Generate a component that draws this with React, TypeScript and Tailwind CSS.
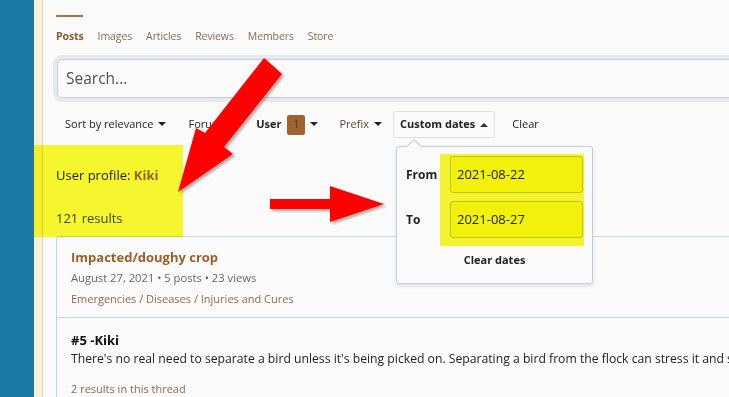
import React from "react";

const tabs = ["Posts", "Images", "Articles", "Reviews", "Members", "Store"];

const Caret = ({ up = false }: { up?: boolean }) => (
  <svg width="8" height="5" viewBox="0 0 8 5" className="ml-[5px] inline-block">
    {up ? <path d="M0 5 L4 1 L8 5 Z" fill="#333" /> : <path d="M0 0 L8 0 L4 4 Z" fill="#222" />}
  </svg>
);

const App: React.FC = () => {
  return (
    <div
      className="relative flex h-[397px] w-[729px] overflow-hidden bg-[#fafafa] text-[#222]"
      style={{ fontFamily: '"Open Sans", "Noto Sans", sans-serif' }}
    >
      {/* left strip */}
      <div className="w-[34px] shrink-0 bg-[#1b79a6]" />
      <div className="w-[8px] shrink-0 bg-[#faf1d8]" />
      <div className="w-px shrink-0 bg-[#dcd6c6]" />

      <main className="min-w-0 flex-1 pl-[13px]">
        {/* tabs */}
        <div className="mt-[15px] h-[2px] w-[27px] bg-[#b07040]" />
        <nav className="mt-[11px] flex gap-[14px] text-[10.5px] leading-[16px] tracking-[-0.1px]">
          {tabs.map((t, i) => (
            <span key={t} className={i === 0 ? "font-bold text-[#8b5a2b]" : "text-[#8c6a55]"}>
              {t}
            </span>
          ))}
        </nav>

        {/* search */}
        <div className="ml-[1px] mt-[15px] w-[700px] rounded-[5px] border border-[#bcd0e3] shadow-[0_0_0_4px_#e9e9e9]">
          <div className="flex h-[37px] items-center pl-[8px] text-[15.5px] text-[#505050]">Search...</div>
        </div>

        {/* filters */}
        <div className="mt-[13px] flex h-[27px] items-center text-[11px] text-[#222]">
          <span className="ml-[9px] flex items-center">
            Sort by relevance
            <Caret />
          </span>
          <span className="ml-[22px]">Forum</span>
          <span className="ml-[34px] font-bold">User</span>
          <span className="ml-[6px] flex h-[20px] w-[18px] items-center justify-center rounded-[2px] bg-[#a0622e] text-[11px] text-[#5c3a1c]">
            1
          </span>
          <Caret />
          <span className="ml-[21px] flex items-center text-[#5b4636]">
            Prefix
            <Caret />
          </span>
          <span className="ml-[11px] flex h-[27px] items-center rounded-[3px] border border-[#e0e0e0] bg-[#fbfbfb] px-[6px] font-bold">
            Custom dates
            <Caret up />
          </span>
          <span className="ml-[17px]">Clear</span>
        </div>

        {/* user profile */}
        <div className="mt-[28px] text-[13px]">
          User profile: <span className="font-bold text-[#9a6232]">Kiki</span>
        </div>
        <div className="mt-[23px] text-[13px] text-[#444]">121 results</div>

        {/* results card */}
        <div className="mt-[8px] w-[700px] rounded-t-[3px] border border-b-0 border-[#c8d7e6]">
          <div className="border-b border-[#c8d7e6] px-[14px] pb-[10px] pt-[11px]">
            <div className="text-[13px] font-bold leading-[18px] text-[#9b5f2c]">Impacted/doughy crop</div>
            <div className="mt-[4px] text-[11.2px] leading-[16px] text-[#666]">
              August 27, 2021 • 5 posts • 23 views
            </div>
            <div className="mt-[5px] text-[11px] leading-[16px] text-[#8c6a50]">
              Emergencies / Diseases / Injuries and Cures
            </div>
          </div>
          <div className="px-[14px] pt-[13px]">
            <div className="text-[13px] font-bold leading-[18px] text-[#111]">#5 -Kiki</div>
            <div className="mt-[1px] whitespace-nowrap text-[12.2px] leading-[18px] text-[#222]">
              There's no real need to separate a bird unless it's being picked on. Separating a bird from the flock can
              stress it and stress the rest of the flock.
            </div>
            <div className="mt-[13px] text-[11px] leading-[16px] text-[#8c6a50]">2 results in this thread</div>
          </div>
        </div>
      </main>

      {/* dates popup */}
      <div className="absolute left-[396px] top-[146px] w-[197px] rounded-[3px] border border-[#c3cfdc] bg-[#fafafa] px-[9px] pb-[14px] pt-[9px] shadow-[0_2px_4px_rgba(0,0,0,0.12)]">
        <div className="absolute -top-[6px] left-[12px] h-[10px] w-[10px] rotate-45 border-l border-t border-[#c3cfdc] bg-[#fafafa]" />
        <div className="flex items-center">
          <span className="w-[44px] text-[12px] font-bold">From</span>
          <div className="flex h-[37px] flex-1 items-center rounded-[3px] border border-[#c9c94a] bg-[#f8f838] pl-[6px] text-[13px] text-[#222]">
            2021-08-22
          </div>
        </div>
        <div className="mt-[8px] flex items-center">
          <span className="w-[44px] text-[12px] font-bold">To</span>
          <div className="flex h-[37px] flex-1 items-center rounded-[3px] border border-[#c9c94a] bg-[#f8f838] pl-[6px] text-[13px] text-[#222]">
            2021-08-27
          </div>
        </div>
        <div className="mt-[14px] text-center text-[11px] font-bold">Clear dates</div>
      </div>

      {/* highlighter marks */}
      <div className="pointer-events-none absolute left-[34px] top-[145px] h-[92px] w-[149px] bg-[#fbfb30] mix-blend-multiply" />
      <div className="pointer-events-none absolute left-[440px] top-[154px] h-[92px] w-[144px] bg-[#f8f832] mix-blend-multiply" />

      {/* annotation arrows */}
      <svg className="pointer-events-none absolute left-0 top-0" width="729" height="397">
        <defs>
          <filter id="sh" x="-20%" y="-20%" width="140%" height="140%">
            <feDropShadow dx="2" dy="2" stdDeviation="1.5" floodColor="#000" floodOpacity="0.35" />
          </filter>
        </defs>
        <g filter="url(#sh)" fill="#ff0000">
          <polygon points="272,65 282,74 224,147 233,154 178,192 196,128 205,133 264,58" />
          <polygon points="270,199 330,199 330,186 384,204 330,222 330,209 270,209" />
        </g>
      </svg>
    </div>
  );
};

export default App;
